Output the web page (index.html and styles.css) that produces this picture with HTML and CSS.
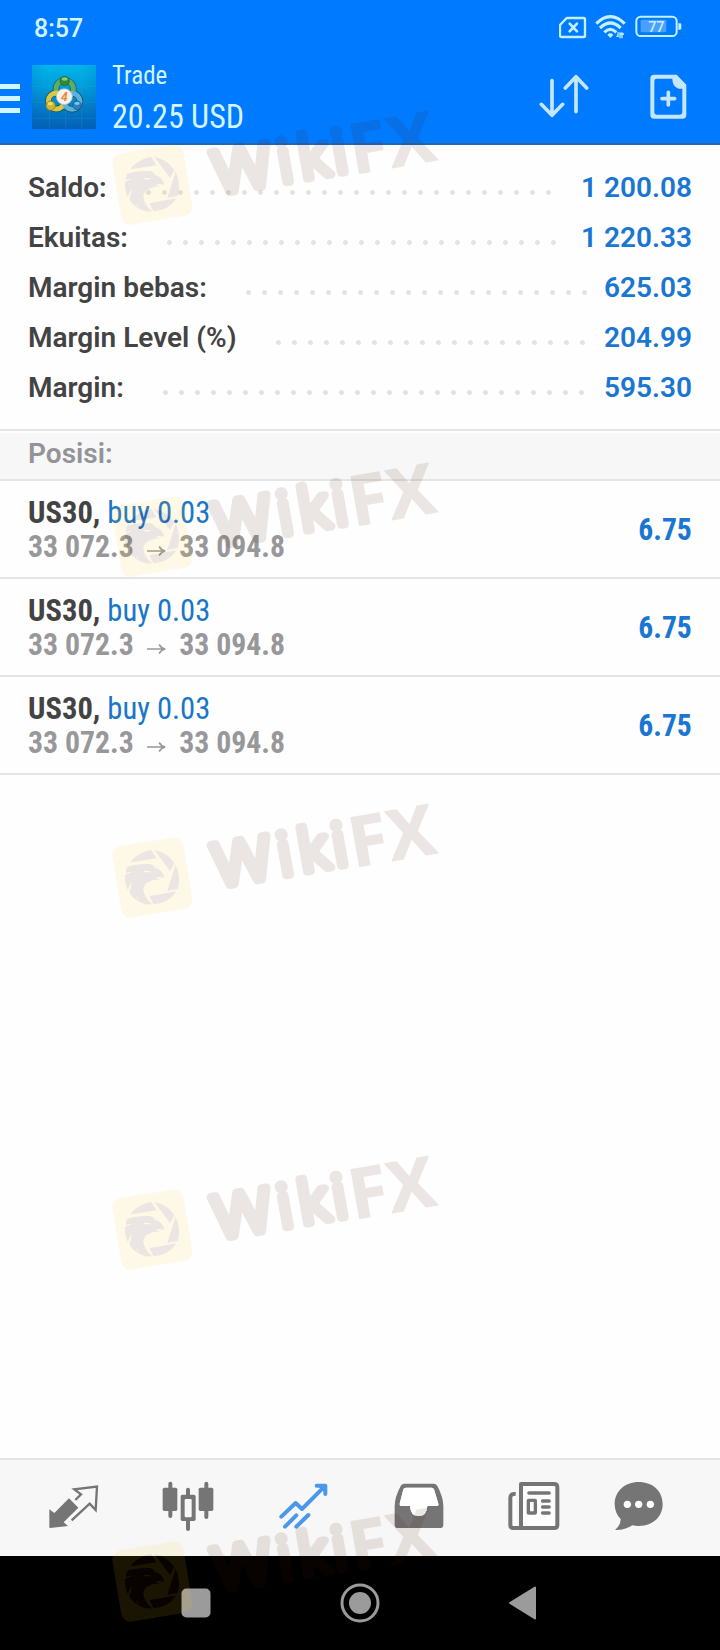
FILE: index.html
```html
<!DOCTYPE html>
<html lang="id">
<head>
<meta charset="utf-8">
<title>Trade</title>
<link rel="stylesheet" href="styles.css">
</head>
<body>
<svg class="defs" width="0" height="0">
  <defs>
    <g id="wikifx">
      <rect x="-108" y="-107" width="216" height="216" rx="28" transform="translate(157 262) rotate(-9.5)" fill="#ffc81e"/>
      <g fill="#501400">
        <path d="M98 208Q124 184 154 180L169 205L92 217Z"/>
        <path d="M163 180Q202 187 223 219L210 243Z"/>
        <path d="M227 224Q244 261 233 297L202 303Z"/>
        <path d="M229 304Q206 340 161 343L148 319Z"/>
        <path d="M82 230Q112 221 150 222Q163 226 163 233Q187 237 193 263Q178 259 166 262Q173 266 181 268Q133 270 130 299Q133 323 156 343Q133 345 114 334Q114 324 110 316Q109 326 112 333Q96 323 88 307Q94 291 96 276Q86 287 84 301Q73 280 75 256Q85 249 97 247Q85 244 77 250Q77 240 82 230Z"/>
      </g>
      <path d="M129 242Q140 252 153 244L145 243Z" fill="#ffc81e"/>
      <g transform="translate(345 305) rotate(-9.9)" fill="#501400" stroke="#501400" stroke-linejoin="round">
        <text class="mark-round" stroke-width="25" y="-12"><tspan x="7" textLength="178" lengthAdjust="spacingAndGlyphs">W</tspan><tspan x="205">i</tspan><tspan x="269">k</tspan><tspan x="371">i</tspan></text>
        <text class="mark-bold" stroke-width="4" y="0"><tspan x="422">F</tspan><tspan x="540">X</tspan></text>
      </g>
    </g>
  </defs>
</svg>
<div class="screen">
  <header class="header">
    <div class="status">
      <span class="time">8:57</span>
      <div class="status-icons">
        <svg class="sim" viewBox="597 45 82 75"><path d="M620 54H671Q675 54 675 58V107Q675 111 671 111H605Q600 111 600 107V75Z" fill="none" stroke="#c4f1ff" stroke-width="7" stroke-linejoin="round"/><path d="M629 71L651 94M651 71L629 94" stroke="#c4f1ff" stroke-width="8" stroke-linecap="round"/></svg>
        <svg class="wifi" viewBox="705 45 93 75"><g fill="none" stroke="#c4f1ff" stroke-width="9.500"><path d="M709 71Q751 29 794 71"/><path d="M720 84Q751 54 782 84"/><path d="M733 97Q751 79 769 97"/></g><path d="M742 104Q751 96 760 104L751 114Z" fill="#c4f1ff"/><path d="M769 109H774V97M780 115V97M786 97V115M782 102H792" fill="none" stroke="#c4f1ff" stroke-width="4"/></svg>
        <svg class="battery" viewBox="824 45 141 75"><rect x="828" y="50" width="121" height="58" rx="13" fill="none" stroke="#c4f1ff" stroke-width="6"/><rect x="841" y="59" width="77" height="38" rx="5" fill="#4a9fff"/><path d="M954 70H959Q963 70 963 74V84Q963 89 959 89H954Z" fill="#c4f1ff"/><text x="888" y="95" text-anchor="middle" class="charge">77</text></svg>
      </div>
    </div>
    <div class="appbar">
      <div class="menu"><i></i><i></i><i></i></div>
      <svg class="logo" viewBox="96 195 192 192">
        <defs>
          <linearGradient id="bg" x1="0" y1="0" x2="0" y2="1"><stop offset="0" stop-color="#00b4ea"/><stop offset=".5" stop-color="#0392d4"/><stop offset="1" stop-color="#0568b8"/></linearGradient>
          <radialGradient id="shade" cx=".5" cy=".2" r=".8"><stop offset=".4" stop-color="#0052b4" stop-opacity="0"/><stop offset="1" stop-color="#0052b4" stop-opacity=".35"/></radialGradient>
        </defs>
        <rect x="96" y="195" width="192" height="192" fill="url(#bg)"/>
        <rect x="96" y="195" width="192" height="192" fill="url(#shade)"/>
        <path d="M148 195V387M197 195V387M245 195V387M96 259H288M96 307H288M96 355H288" stroke="#2ab0e6" stroke-width="1.5" opacity=".4"/>
        <g fill="none" stroke="#1b4f50" stroke-width="19"><circle cx="194" cy="267" r="26"/><circle cx="169" cy="303" r="24"/><circle cx="216" cy="304" r="24"/></g>
        <circle cx="194" cy="267" r="26" fill="none" stroke="#5dae64" stroke-width="15"/>
        <circle cx="169" cy="303" r="24" fill="none" stroke="#d3c84a" stroke-width="15"/>
        <circle cx="216" cy="304" r="24" fill="none" stroke="#59b2e0" stroke-width="15"/>
        <circle cx="194" cy="243" r="14" fill="#2f8b3b" stroke="#17642b" stroke-width="2"/><ellipse cx="194" cy="237" rx="9" ry="5" fill="#85cc76"/>
        <circle cx="152" cy="317" r="14" fill="#ceb42e" stroke="#7e7824" stroke-width="2"/><ellipse cx="151" cy="311" rx="8" ry="5" fill="#f0dc70"/>
        <circle cx="231" cy="316" r="13" fill="#2b80c4" stroke="#165487" stroke-width="2"/><ellipse cx="231" cy="310" rx="8" ry="5" fill="#7bc6f0"/>
        <circle cx="193" cy="290" r="24" fill="#f4f2ea" stroke="#b9b6a0" stroke-width="2"/>
        <text x="193" y="304" text-anchor="middle" class="logo-digit">4</text>
      </svg>
      <div class="titles"><span class="title">Trade</span><span class="profit">20.25 USD</span></div>
      <svg class="sort" viewBox="537 220 150 140"><path d="M576 243V346M544 314L576 347L608 314M648 336V232M616 265L648 231L680 265" fill="none" stroke="#c5e6ff" stroke-width="11" stroke-linecap="round" stroke-linejoin="round"/></svg>
      <svg class="add" viewBox="869 220 110 140"><path fill-rule="evenodd" d="M881 225H949L978 255V345Q978 357 966 357H882Q870 357 870 345V237Q870 225 881 225ZM889 237Q882 237 882 244V337Q882 345 890 345H958Q966 345 966 337V267H955Q936 261 936 237Z" fill="#c5e6ff"/><path d="M924 278V316M905 297H943" stroke="#c5e6ff" stroke-width="11" stroke-linecap="round"/></svg>
    </div>
  </header>
  <section class="summary">
    <div class="line"><span>Saldo:</span><i class="dots"></i><b class="long">1 200.08</b></div>
    <div class="line"><span>Ekuitas:</span><i class="dots"></i><b class="long">1 220.33</b></div>
    <div class="line"><span>Margin bebas:</span><i class="dots"></i><b>625.03</b></div>
    <div class="line"><span>Margin Level (%)</span><i class="dots"></i><b>204.99</b></div>
    <div class="line"><span>Margin:</span><i class="dots"></i><b>595.30</b></div>
  </section>
  <h2 class="section">Posisi:</h2>
  <main class="positions">
    <div class="position"><div><p class="order"><b>US30,</b> <span>buy 0.03</span></p><p class="prices">33 072.3<svg class="arrow" viewBox="0 0 22 12"><path d="M1 6H20M14 1.5Q16 5 20.500 6Q16 7 14 10.500" fill="none" stroke="currentColor" stroke-width="1.700"/></svg>33 094.8</p></div><b class="gain">6.75</b></div>
    <div class="position"><div><p class="order"><b>US30,</b> <span>buy 0.03</span></p><p class="prices">33 072.3<svg class="arrow" viewBox="0 0 22 12"><path d="M1 6H20M14 1.5Q16 5 20.500 6Q16 7 14 10.500" fill="none" stroke="currentColor" stroke-width="1.700"/></svg>33 094.8</p></div><b class="gain">6.75</b></div>
    <div class="position"><div><p class="order"><b>US30,</b> <span>buy 0.03</span></p><p class="prices">33 072.3<svg class="arrow" viewBox="0 0 22 12"><path d="M1 6H20M14 1.5Q16 5 20.500 6Q16 7 14 10.500" fill="none" stroke="currentColor" stroke-width="1.700"/></svg>33 094.8</p></div><b class="gain">6.75</b></div>
  </main>
  <nav class="tabs">
    <svg viewBox="144 90 156 156"><path d="M148 178L163 189L207 145L235 173L191 217L204 228L150 234Q148 234 148 231Z" fill="#757575"/><path d="M226 150L243 133L223 118L291 110L287 180L269 161L215 211" fill="none" stroke="#757575" stroke-width="7"/></svg>
    <svg viewBox="487 90 156 156"><g fill="#757575"><rect x="489" y="113" width="44" height="70" rx="5"/><rect x="597" y="113" width="44" height="70" rx="5"/><path fill-rule="evenodd" d="M548 134H582Q588 134 588 140V208Q588 213 582 213H548Q543 213 543 208V140Q543 134 548 134ZM558 147Q555 147 555 150V199Q555 202 558 202H573Q576 202 576 199V150Q576 147 573 147Z"/></g><path d="M512 101V198M620 101V201M565 119V137M565 212V237" stroke="#757575" stroke-width="12" stroke-linecap="round"/></svg>
    <svg viewBox="833 90 156 156"><path d="M843 200L886 159L905 177L972 110M949 107H975V132M854 230L888 196M888 230L924 195" fill="none" stroke="#4b98ea" stroke-width="12" stroke-linecap="round" stroke-linejoin="round"/><path d="M952 107H976V131Z" fill="#4b98ea"/></svg>
    <svg viewBox="98 90 156 156"><path fill-rule="evenodd" d="M132 101H220Q227 101 231 108Q249 142 249 168V224Q249 234 239 234H112Q103 234 103 224V168Q103 142 121 108Q125 101 132 101ZM137 113Q131 113 129 118L118 161Q117 168 123 168H149Q150 198 175 198Q200 198 201 168H229Q236 168 234 161L221 118Q219 113 214 113Z" fill="#757575"/><path d="M137 113H214Q219 113 221 118L234 161Q236 168 229 168H201Q200 198 175 198Q150 198 149 168H123Q117 168 118 161L129 118Q131 113 137 113Z" fill="#fff"/></svg>
    <svg viewBox="443 90 156 156"><path d="M466 132Q450 130 450 144V226Q450 234 459 234H482V102H581Q591 102 591 112V226Q591 234 582 234H470" fill="#fdfdfd" stroke="#757575" stroke-width="12" stroke-linejoin="round"/><path d="M506 129H566M547 153H566M547 171H566M547 189H566" stroke="#757575" stroke-width="11" stroke-linecap="round"/><rect x="504" y="151" width="21" height="38" rx="1" fill="none" stroke="#757575" stroke-width="10"/></svg>
    <svg viewBox="760 90 156 156"><path d="M837 96C880 96 909 124 909 162C909 202 878 228 837 228Q827 228 818 226Q796 241 766 240Q783 226 783 207Q765 190 765 162C765 124 796 96 837 96Z" fill="#757575"/><g fill="#fff"><circle cx="803" cy="163" r="11"/><circle cx="837" cy="163" r="11"/><circle cx="872" cy="163" r="11"/></g></svg>
  </nav>
  <footer class="system">
    <svg class="recents" viewBox="0 0 30 30"><rect x=".500" y=".500" width="29" height="29" rx="5" fill="#9b9b9b"/></svg>
    <svg class="home" viewBox="0 0 40 40"><circle cx="20" cy="20" r="18" fill="none" stroke="#9b9b9b" stroke-width="3"/><circle cx="20" cy="20" r="11" fill="#9b9b9b"/></svg>
    <svg class="back" viewBox="0 0 28 34"><path d="M1 17L26 1.500V32.500Z" fill="#9b9b9b" stroke="#9b9b9b" stroke-width="2" stroke-linejoin="round"/></svg>
  </footer>
  <svg class="mark mark-1" viewBox="0 0 1080 450"><use href="#wikifx"/></svg>
  <svg class="mark mark-2" viewBox="0 0 1080 450"><use href="#wikifx"/></svg>
  <svg class="mark mark-3" viewBox="0 0 1080 450"><use href="#wikifx"/></svg>
  <svg class="mark mark-4" viewBox="0 0 1080 450"><use href="#wikifx"/></svg>
  <svg class="mark mark-5" viewBox="0 0 1080 450"><use href="#wikifx"/></svg>
</div>
</body>
</html>
```
FILE: styles.css
```css
* { box-sizing: border-box; margin: 0; padding: 0; }
body { background: #fff; font-family: Roboto, sans-serif; color: #434343; }
svg { display: block; flex: none; }
.defs { position: absolute; }
.screen { position: relative; width: 720px; height: 1650px; display: flex; flex-direction: column; overflow: hidden; background: #fefefe; }

.header { height: 145px; background: #007aff; border-bottom: 2px solid #2068b4; color: #d2f6ff; }
.status { height: 52px; padding: 15px 38px 0 34px; display: flex; justify-content: space-between; align-items: flex-start; }
.time { font-size: 25px; line-height: 28px; font-weight: 500; }
.status-icons { display: flex; }
.sim { width: 27.33px; height: 25px; }
.wifi { width: 31px; height: 25px; margin-left: 8.67px; }
.battery { width: 47px; height: 25px; margin-left: 8.67px; }
.charge { font-size: 43px; font-weight: 500; fill: #c4f1ff; }
.appbar { display: flex; align-items: flex-start; height: 91px; padding-right: 33px; }
.menu { width: 20px; padding-top: 32px; display: flex; flex-direction: column; gap: 7px; }
.menu i { height: 5px; background: #d2f6ff; }
.logo { width: 64px; height: 64px; margin: 13px 16px 0 12px; }
.logo-digit { font-size: 36px; font-weight: 700; font-style: italic; fill: #f08537; }
.titles { flex: 1; padding-top: 8px; display: flex; flex-direction: column; gap: 6px; font-family: "Roboto Condensed", Roboto, sans-serif; font-stretch: 75%; }
.title { font-size: 26px; line-height: 30px; transform: scaleX(.96); transform-origin: left; }
.profit { font-size: 34px; line-height: 40px; transform: scaleX(.943); transform-origin: left; }
.sort { width: 50px; height: 46.67px; margin: 21.33px 61px 0 0; }
.add { width: 36.67px; height: 46.67px; margin-top: 21.33px; }

.summary { height: 286px; padding: 17px 28px 0; border-bottom: 2px solid #e4e4e4; font-size: 28px; }
.line { display: flex; height: 50px; line-height: 51px; font-weight: 600; white-space: nowrap; }
.line b { font-weight: 600; color: #1976d2; }
.line .long { margin-left: 4px; }
.dots { flex: 1; height: 5px; margin: 28px 16px 0 39.5px; background: radial-gradient(circle at 2.5px 2.5px, #e3e3e3 2.1px, transparent 2.8px) 0 0 / 16px 5px repeat-x; }

.section { height: 48px; margin-top: 2px; padding-left: 28px; background: #f7f7f7; border-bottom: 2px solid #e4e4e4; font-size: 28px; line-height: 41px; font-weight: 600; color: #949498; }
.positions { flex: 1; font-family: "Roboto Condensed", Roboto, sans-serif; font-stretch: 75%; font-size: 32px; }
.position { height: 98px; padding: 14px 28px 0; display: flex; justify-content: space-between; border-bottom: 2px solid #e4e4e4; line-height: 34px; }
.position b { font-weight: 700; }
.position span { color: #1976c9; }
.order { transform: scaleX(.955); transform-origin: left; }
.position .prices { display: flex; font-weight: 700; color: #98989a; transform: scaleX(.93); transform-origin: left; }
.arrow { width: 22px; height: 12px; margin: 16px 14px 0 13px; }
.position .gain { line-height: 68px; color: #1976d2; transform: scaleX(.925); transform-origin: right; }

.tabs { height: 98px; padding: 20px 28px 0 48px; display: grid; grid-template-columns: 114.33px 115.33px 115px 115px 105.67px 52px; background: #f7f7f7; border-top: 2px solid #e4e4e4; }
.tabs svg { width: 52px; height: 52px; }
.system { height: 94px; display: flex; padding-left: 180.500px; background: #000; }
.recents { width: 30px; height: 30px; margin-top: 32px; }
.home { width: 40px; height: 40px; margin: 27px 0 0 129.500px; }
.back { width: 28px; height: 34px; margin: 30px 0 0 129px; }

.mark { position: absolute; left: 100px; width: 360px; height: 150px; opacity: .1; pointer-events: none; }
.mark-1 { top: 97px; }
.mark-2 { top: 449px; }
.mark-3 { top: 790px; }
.mark-4 { top: 1142px; }
.mark-5 { top: 1494px; }
.mark-round { font-family: Roboto, sans-serif; font-size: 179px; font-weight: 300; }
.mark-bold { font-family: "Open Sans", sans-serif; font-size: 208px; font-weight: 700; }
```
